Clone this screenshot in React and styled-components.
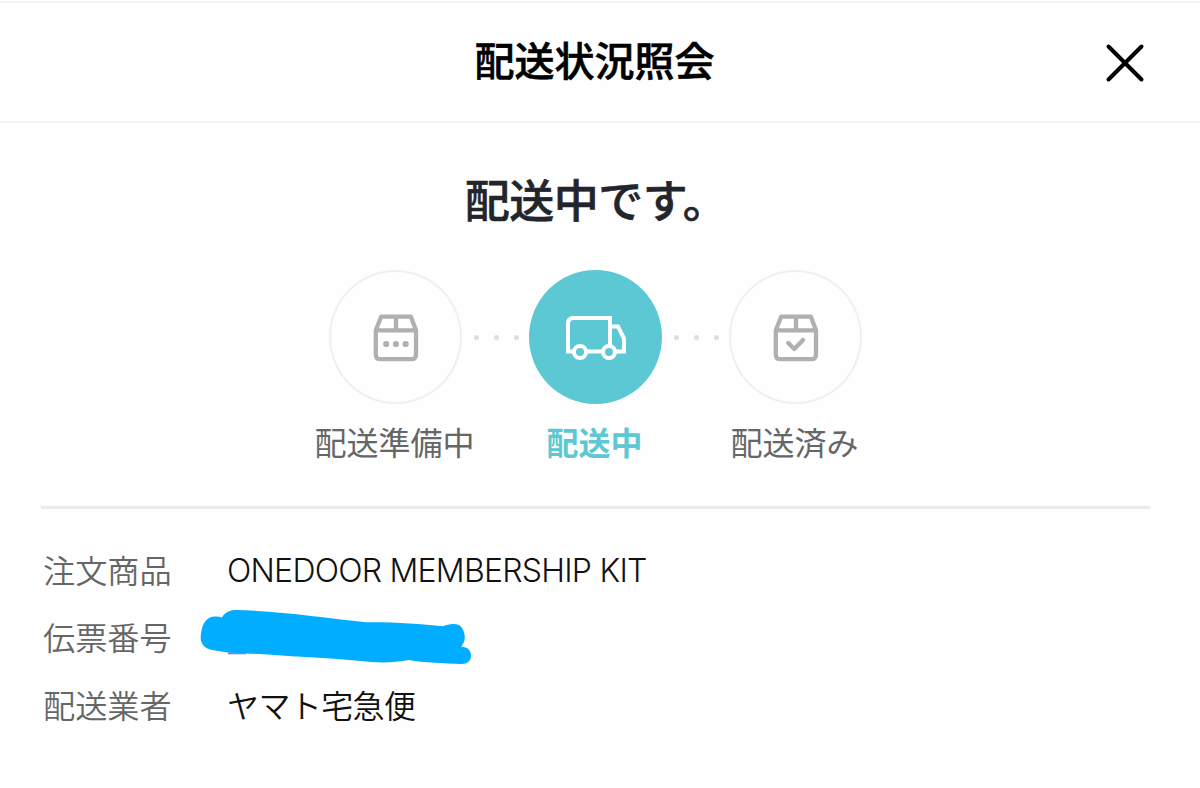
import React from "react";
import styled, { createGlobalStyle } from "styled-components";

const GlobalStyle = createGlobalStyle`
  * { box-sizing: border-box; }
  body {
    margin: 0;
    background: #fefefe;
    font-family: Inter, "Noto Sans CJK JP", sans-serif;
  }
  h1, h2, dl, dd, dt, ol { margin: 0; padding: 0; }
`;

const Sheet = styled.main`
  width: 1200px;
  height: 788px;
  padding-top: 1px;
  overflow: hidden;
`;

const Header = styled.header`
  display: grid;
  grid-template-columns: 100px 1fr 100px;
  align-items: center;
  height: 122px;
  padding-right: 10px;
  border-top: 2px solid #f4f4f5;
  border-bottom: 2px solid #f4f4f5;
`;

const Title = styled.h1`
  grid-column: 2;
  padding: 0 1px 6px 0;
  text-align: center;
  font: 500 40px/60px "Noto Sans CJK JP", sans-serif;
  color: #000;
  -webkit-text-stroke: 0.6px #000;
`;

const CloseButton = styled.button`
  display: flex;
  justify-self: start;
  margin-left: 12px;
  padding: 1px 0 0;
  border: 0;
  background: none;
`;

const Content = styled.section`
  display: flex;
  flex-direction: column;
  width: 1150px;
  padding: 43px 0 0 41px;
`;

const Status = styled.h2`
  padding-left: 1px;
  text-align: center;
  font: 500 45px/66px "Noto Sans CJK JP", sans-serif;
  letter-spacing: -0.5px;
  color: #22252b;
  -webkit-text-stroke: 0.6px #22252b;
`;

const Steps = styled.ol`
  display: flex;
  justify-content: center;
  margin-top: 38px;
  padding-right: 1px;
  list-style: none;
`;

const Step = styled.li`
  display: flex;
  flex-direction: column;
  align-items: center;
  width: 133px;
`;

const StepCircle = styled.div`
  display: flex;
  align-items: center;
  justify-content: center;
  width: 133px;
  height: 134px;
  padding: 2px 0 0 1px;
  border-radius: 50%;
  border: 2px solid ${(p) => (p.$active ? "#5cc8d4" : "#efeff6")};
  background: ${(p) => (p.$active ? "#5cc8d4" : "transparent")};
`;

const StepLabel = styled.span`
  margin-top: 13px;
  padding-right: 1px;
  white-space: nowrap;
  font: ${(p) => (p.$active ? 700 : 400)} 32px/48px "Noto Sans CJK JP", sans-serif;
  color: ${(p) => (p.$active ? "#5cc8d4" : "#666")};
`;

const Dots = styled.li`
  display: flex;
  align-items: center;
  gap: 15px;
  width: 67px;
  height: 135px;
  padding-left: 12px;
`;

const Dot = styled.i`
  width: 5px;
  height: 5px;
  border-radius: 50%;
  background: #dddde3;
`;

const Divider = styled.hr`
  width: 100%;
  height: 3px;
  margin: 41px 0 0;
  border: 0;
  background: #ebebec;
`;

const Details = styled.dl`
  display: flex;
  flex-direction: column;
  padding: 27px 0 0 2px;
`;

const DetailRow = styled.div`
  display: flex;
  align-items: center;
  height: 67.5px;
`;

const Term = styled.dt`
  width: 184px;
  padding-bottom: 2px;
  font: 350 32.2px/48px "Noto Sans CJK JP", sans-serif;
  color: #666;
`;

const Value = styled.dd`
  padding: ${(p) => (p.$latin ? "3px 0 0" : "0 0 2px")};
  font: ${(p) => (p.$latin ? "330 32px/48px Inter" : '350 32px/48px "Noto Sans CJK JP"')}, sans-serif;
  letter-spacing: ${(p) => (p.$latin ? "-0.75px" : "-0.6px")};
  color: #111;
`;

const Scribble = styled.svg`
  display: block;
  margin: 2px 0 0 -28px;
`;

const Package = ({ children }) => (
  <svg width="46" height="48" viewBox="0 0 46 48" fill="none" stroke="#b0b0b0" strokeWidth="4.3" strokeLinejoin="round" strokeLinecap="round">
    <path d="M2.8 16.3V40.5Q2.8 45.2 7.5 45.2H38.3Q43 45.2 43 40.5V16.3L37.8 2.6H8.2ZM3 16.3H43M23 2.6V16.3" />
    {children}
  </svg>
);

const Truck = () => (
  <svg width="62" height="46" viewBox="0 0 62 46" fill="none" stroke="#fff" strokeWidth="4">
    <path d="M9 36.5H3V8.5Q3 3 8.5 3H45V31M45 11.5H53L59 23.5V36.5H49.5M38 36.5H21" />
    <circle cx="15" cy="37" r="6" />
    <circle cx="44" cy="37" r="6" />
  </svg>
);

const DotTrail = () => (
  <Dots aria-hidden="true">
    <Dot />
    <Dot />
    <Dot />
  </Dots>
);

export default function App() {
  return (
    <>
      <GlobalStyle />
      <Sheet>
        <Header>
          <Title>配送状況照会</Title>
          <CloseButton aria-label="閉じる">
            <svg width="46" height="46" viewBox="0 0 46 46" stroke="#000" strokeWidth="4" strokeLinecap="round">
              <path d="M6.5 6.5L39.5 39.5M39.5 6.5L6.5 39.5" />
            </svg>
          </CloseButton>
        </Header>
        <Content>
          <Status>配送中です。</Status>
          <Steps>
            <Step>
              <StepCircle>
                <Package>
                  <g fill="#b0b0b0" stroke="none">
                    <circle cx="13.2" cy="30" r="3.1" />
                    <circle cx="22.9" cy="30" r="3.1" />
                    <circle cx="32.6" cy="30" r="3.1" />
                  </g>
                </Package>
              </StepCircle>
              <StepLabel>配送準備中</StepLabel>
            </Step>
            <DotTrail />
            <Step>
              <StepCircle $active>
                <Truck />
              </StepCircle>
              <StepLabel $active>配送中</StepLabel>
            </Step>
            <DotTrail />
            <Step>
              <StepCircle>
                <Package>
                  <path d="M15.2 29L21.3 35L30 26" />
                </Package>
              </StepCircle>
              <StepLabel>配送済み</StepLabel>
            </Step>
          </Steps>
          <Divider />
          <Details>
            <DetailRow>
              <Term>注文商品</Term>
              <Value $latin>ONEDOOR MEMBERSHIP KIT</Value>
            </DetailRow>
            <DetailRow>
              <Term>伝票番号</Term>
              <Value>
                <Scribble width="274" height="56" viewBox="199 609 274 56">
                  <path d="M228 653.3H246" stroke="#8f7af5" strokeWidth="2" />
                  <path
                    fill="#00adff"
                    d="M201 634C202 622 208 616 216 616.5Q219 616.5 222 617.5C225 612 230 610 236 610C280 611 325 618 366 622.3C395 622 420 624 443 626.2C448 624 454 623 459 625C464 628 466 637 464 642Q462 645 461.5 647C468 646.5 471 651 471 655.5C471 661 467 664 462 664C443 663 425 663 409 660C394 663 376 663 361 661C330 658 300 657 268 654.5L228 652.5L212 650C203 648 199.5 642 201 634Z"
                  />
                </Scribble>
              </Value>
            </DetailRow>
            <DetailRow>
              <Term>配送業者</Term>
              <Value>ヤマト宅急便</Value>
            </DetailRow>
          </Details>
        </Content>
      </Sheet>
    </>
  );
}
